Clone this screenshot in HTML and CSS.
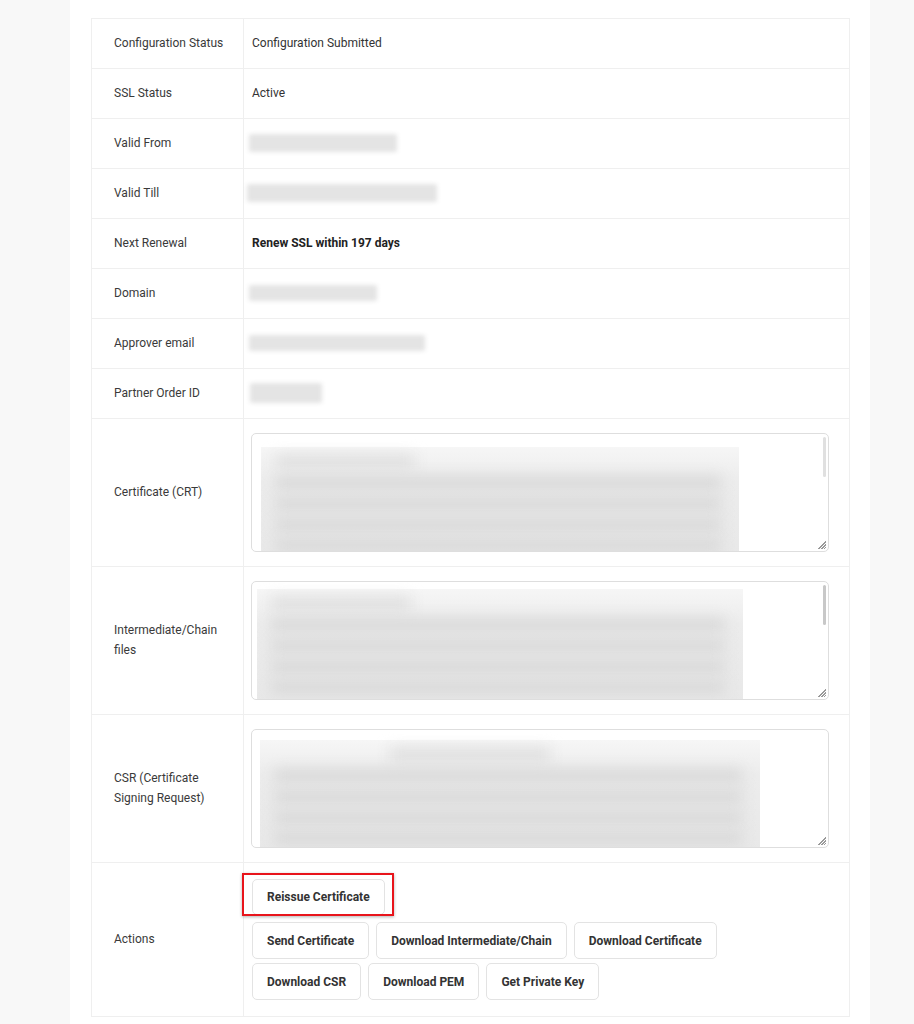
FILE: index.html
```html
<!DOCTYPE html>
<html lang="en">
<head>
  <meta charset="UTF-8">
  <meta name="viewport" content="width=device-width, initial-scale=1.0">
  <title>SSL Certificate Details</title>
  <link rel="stylesheet" href="styles.css">
</head>
<body>
  <div class="card">
    <table class="ssl-table">
      <tr>
        <td class="label">Configuration Status</td>
        <td class="value">Configuration Submitted</td>
      </tr>
      <tr>
        <td class="label">SSL Status</td>
        <td class="value">Active</td>
      </tr>
      <tr>
        <td class="label">Valid From</td>
        <td class="value"><div class="hidden-val w-from"></div></td>
      </tr>
      <tr>
        <td class="label">Valid Till</td>
        <td class="value"><div class="hidden-val w-till"></div></td>
      </tr>
      <tr>
        <td class="label">Next Renewal</td>
        <td class="value"><strong>Renew SSL within 197 days</strong></td>
      </tr>
      <tr>
        <td class="label">Domain</td>
        <td class="value"><div class="hidden-val w-domain"></div></td>
      </tr>
      <tr>
        <td class="label">Approver email</td>
        <td class="value"><div class="hidden-val w-email"></div></td>
      </tr>
      <tr>
        <td class="label">Partner Order ID</td>
        <td class="value"><div class="hidden-val w-order"></div></td>
      </tr>
      <tr>
        <td class="label">Certificate (CRT)</td>
        <td class="value box-cell">
          <div class="code-box">
            <div class="code-blur crt">
              <div class="line short"></div>
              <div class="line"></div>
              <div class="line"></div>
              <div class="line"></div>
              <div class="line"></div>
            </div>
            <span class="thumb"></span>
            <span class="grip"></span>
          </div>
        </td>
      </tr>
      <tr>
        <td class="label">Intermediate/Chain files</td>
        <td class="value box-cell">
          <div class="code-box">
            <div class="code-blur chain">
              <div class="line short"></div>
              <div class="line"></div>
              <div class="line"></div>
              <div class="line"></div>
              <div class="line"></div>
            </div>
            <span class="thumb dark"></span>
            <span class="grip"></span>
          </div>
        </td>
      </tr>
      <tr>
        <td class="label">CSR (Certificate Signing Request)</td>
        <td class="value box-cell">
          <div class="code-box">
            <div class="code-blur csr">
              <div class="line short mid"></div>
              <div class="line"></div>
              <div class="line"></div>
              <div class="line"></div>
              <div class="line"></div>
            </div>
            <span class="grip"></span>
          </div>
        </td>
      </tr>
      <tr>
        <td class="label">Actions</td>
        <td class="value actions">
          <div class="first-row">
            <span class="highlight"><button class="btn">Reissue Certificate</button></span>
          </div>
          <div class="btn-row">
            <button class="btn">Send Certificate</button>
            <button class="btn">Download Intermediate/Chain</button>
            <button class="btn">Download Certificate</button>
          </div>
          <div class="btn-row">
            <button class="btn">Download CSR</button>
            <button class="btn">Download PEM</button>
            <button class="btn">Get Private Key</button>
          </div>
        </td>
      </tr>
    </table>
  </div>
</body>
</html>
```

FILE: styles.css
```css
body {
  margin: 0;
  background: #f8f8f8;
  font-family: Roboto, 'Liberation Sans', sans-serif;
  font-size: 12px;
  color: #333;
}

.card {
  margin-left: 70px;
  width: 758px;
  background: #fff;
  padding: 18px 21px 30px;
}

.ssl-table {
  width: 759px;
  border-collapse: collapse;
  border: 1px solid #efefef;
}

.ssl-table td {
  border: 1px solid #efefef;
  line-height: 20px;
  padding: 14px 8px 15px;
  vertical-align: middle;
}

.ssl-table td.label {
  width: 116px;
  padding-left: 22px;
  padding-right: 13px;
  color: #3a3a3a;
}

.ssl-table td.value {
  padding-right: 20px;
}

.value strong {
  font-weight: 700;
  color: #222;
}

.hidden-val {
  height: 18px;
  margin-left: -3px;
  background: #e4e4e4;
  border-radius: 2px;
  filter: blur(2px);
}

.w-from { width: 148px; }
.w-till { width: 190px; margin-left: -5px; }
.w-domain { width: 128px; height: 16px; }
.w-email { width: 176px; height: 16px; }
.w-order { width: 72px; height: 20px; margin-left: -2px; }

.ssl-table td.box-cell {
  padding-top: 14px;
  padding-bottom: 14px;
}

.code-box {
  position: relative;
  height: 117px;
  margin-left: -1px;
  border: 1px solid #dedede;
  border-radius: 5px;
  overflow: hidden;
  background: #fff;
}

.code-blur {
  height: 100%;
  margin: 13px 0 0 9px;
  padding-top: 8px;
  background: linear-gradient(to bottom, #f6f6f6, #ececec 30%, #e8e8e8);
  box-sizing: border-box;
}

.code-blur.crt { width: 478px; }
.code-blur.chain { width: 486px; margin-top: 7px; margin-left: 5px; }
.code-blur.csr { width: 500px; margin-top: 10px; margin-left: 8px; }

.code-blur .line {
  height: 13px;
  margin: 0 18px 8px 14px;
  background: #d8d8d8;
  filter: blur(7px);
}

.code-blur .line.short {
  width: 140px;
  background: #dedede;
}

.code-blur .line.mid {
  margin-left: 130px;
  width: 160px;
}

.thumb {
  position: absolute;
  top: 3px;
  right: 2px;
  width: 3px;
  height: 40px;
  border-radius: 2px;
  background: #e0e0e0;
}

.thumb.dark {
  background: #c8c8c8;
}

.grip {
  position: absolute;
  right: 2px;
  bottom: 2px;
  width: 9px;
  height: 9px;
  background: repeating-linear-gradient(135deg, transparent 0 1px, #999 1px 2px);
  clip-path: polygon(100% 0, 100% 100%, 0 100%);
}

.ssl-table td.actions {
  padding-top: 16px;
  padding-bottom: 16px;
}

.first-row {
  margin-bottom: 7px;
}

.btn-row {
  display: flex;
  gap: 7px;
  margin-bottom: 4px;
}

.btn-row:last-child {
  margin-bottom: 0;
}

.btn {
  height: 36px;
  padding: 0 14px;
  font-family: Roboto, 'Liberation Sans', sans-serif;
  font-size: 12px;
  font-weight: 700;
  color: #333;
  background: #fff;
  border: 1px solid #e3e3e3;
  border-radius: 5px;
}

.btn-row .btn {
  height: 37px;
}

.highlight {
  position: relative;
  display: inline-block;
}

.highlight::after {
  content: '';
  position: absolute;
  top: -6px;
  left: -10px;
  right: -9px;
  bottom: -1px;
  border: 2px solid #e8141b;
  box-shadow: 0 1px 3px rgba(0, 0, 0, 0.3);
  pointer-events: none;
}
```
